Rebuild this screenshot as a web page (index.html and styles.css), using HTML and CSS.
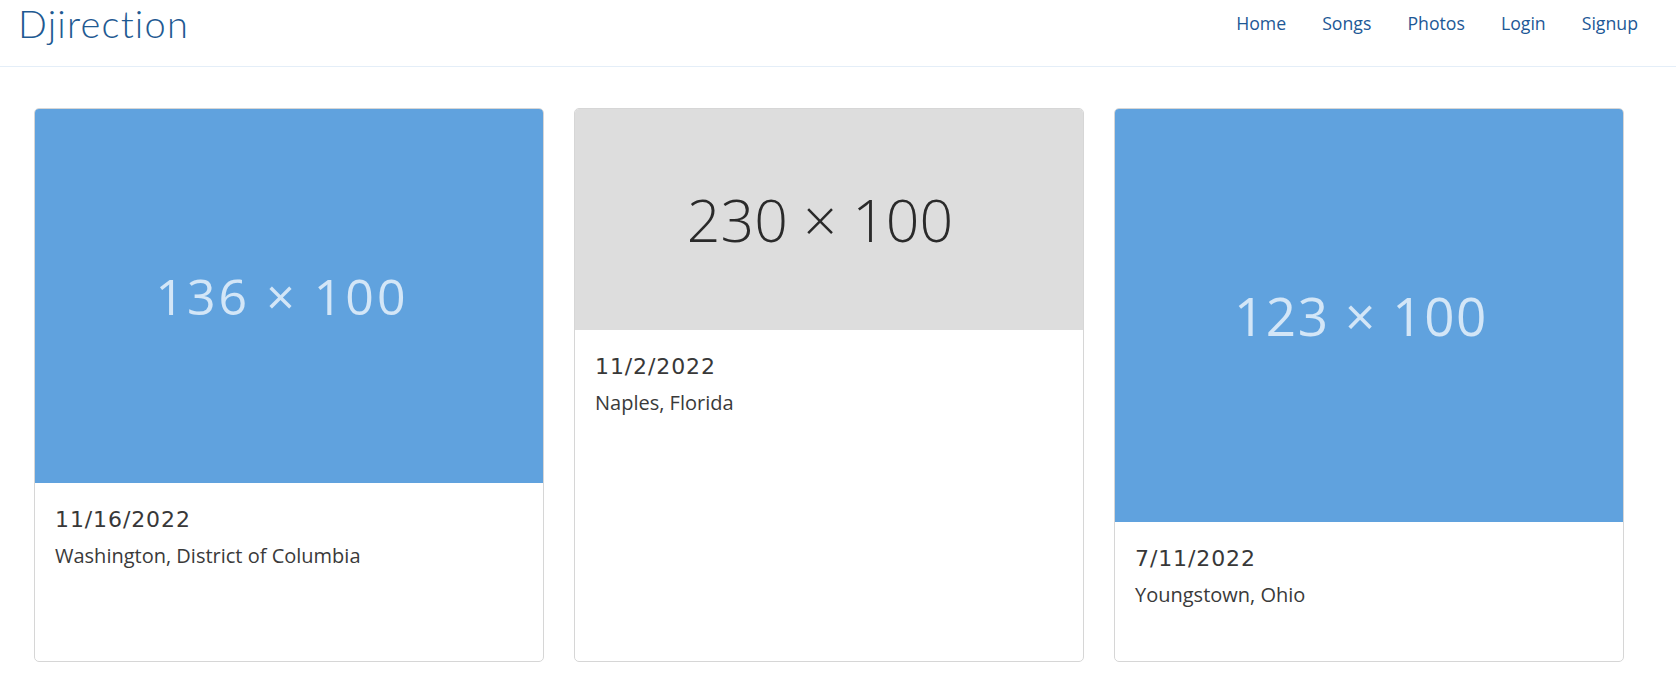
FILE: index.html
```html
<!DOCTYPE html>
<html lang="en">
<head>
<meta charset="utf-8">
<title>Djirection</title>
<link rel="stylesheet" href="styles.css">
</head>
<body>
<header class="navbar">
  <a class="brand" href="#">Djirection</a>
  <nav>
    <ul class="nav-links">
      <li><a href="#">Home</a></li>
      <li><a href="#">Songs</a></li>
      <li><a href="#">Photos</a></li>
      <li><a href="#">Login</a></li>
      <li><a href="#">Signup</a></li>
    </ul>
  </nav>
</header>
<main class="cards">
  <article class="card">
    <div class="card-img ph-blue ph-136" style="aspect-ratio:136/100"><span>136 × 100</span></div>
    <div class="card-body">
      <h5 class="card-date">11/16/2022</h5>
      <p class="card-text">Washington, District of Columbia</p>
    </div>
  </article>
  <article class="card">
    <div class="card-img ph-gray ph-230" style="aspect-ratio:230/100"><span>230 × 100</span></div>
    <div class="card-body">
      <h5 class="card-date">11/2/2022</h5>
      <p class="card-text">Naples, Florida</p>
    </div>
  </article>
  <article class="card">
    <div class="card-img ph-blue ph-123" style="aspect-ratio:123/100"><span>123 × 100</span></div>
    <div class="card-body">
      <h5 class="card-date">7/11/2022</h5>
      <p class="card-text">Youngstown, Ohio</p>
    </div>
  </article>
</main>
</body>
</html>
```

FILE: styles.css
```css
* { box-sizing: border-box; }

body {
  margin: 0;
  background: #fff;
  font-family: "Open Sans", "Liberation Sans", sans-serif;
  color: #333;
}

.navbar {
  display: flex;
  align-items: center;
  justify-content: space-between;
  height: 67px;
  padding: 0 20px 0 18px;
  border-bottom: 1px solid #e4eef8;
}

.brand {
  font-family: "Lato", "Open Sans", sans-serif;
  font-weight: 300;
  font-size: 38px;
  letter-spacing: 1.2px;
  color: #1f5a92;
  text-decoration: none;
  margin-top: -21px;
}

.nav-links {
  display: flex;
  list-style: none;
  margin: 0;
  padding: 0;
  margin-top: -20px;
}

.nav-links a {
  display: block;
  padding: 0 18px;
  font-size: 17.7px;
  color: #1d5896;
  text-decoration: none;
}

.cards {
  display: flex;
  align-items: stretch;
  gap: 30px;
  padding: 41px 0 0 34px;
}

.card {
  width: 510px;
  border: 1px solid #d6d6d6;
  border-radius: 5px;
  overflow: hidden;
  background: #fff;
}

.card-img {
  width: 100%;
  display: flex;
  align-items: center;
  justify-content: center;
  white-space: nowrap;
}

.ph-blue {
  background: #60a2de;
  color: #d3e6f7;
  font-weight: 400;
}

.ph-blue span { filter: blur(0.6px); }

.ph-gray {
  background: #dddddd;
  color: #2a2a2a;
  font-weight: 300;
}

.ph-136 { font-size: 50px; letter-spacing: 3px; padding-right: 14px; }
.ph-230 { font-size: 59px; letter-spacing: 0; padding-right: 18px; }
.ph-123 { font-size: 53px; letter-spacing: 1.6px; padding-right: 16px; }

.card-body {
  padding: 25px 20px 51px 20px;
}

.card-date {
  margin: 0 0 9px 0;
  font-family: "DejaVu Sans", "Open Sans", sans-serif;
  font-weight: normal;
  font-size: 22px;
  line-height: 24px;
  letter-spacing: 0.9px;
  color: #383838;
}

.card-text {
  margin: 0;
  font-size: 20px;
  line-height: 30px;
  color: #3a3a3a;
}
```
